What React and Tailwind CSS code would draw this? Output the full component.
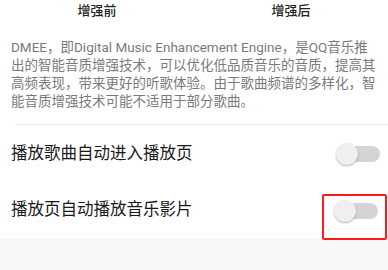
import React from "react";

function Toggle() {
  return (
    <div className="relative w-[46px] h-[24px] flex items-center">
      <div className="ml-[9px] w-[35px] h-[16px] rounded-full bg-[#d4d4d4]" />
      <div className="absolute left-0 top-[1px] w-[22px] h-[22px] rounded-full bg-[#efefef] shadow-[0_1px_2px_rgba(0,0,0,0.3)]" />
    </div>
  );
}

export default function App() {
  const font = { fontFamily: 'Roboto, "Noto Sans CJK SC", sans-serif' };
  return (
    <div className="w-[388px] h-[270px] bg-white relative overflow-hidden" style={font}>
      <div className="grid grid-cols-2 h-[22px] items-center">
        <div className="text-center text-[13px] font-medium text-[#222]">增强前</div>
        <div className="text-center text-[13px] font-medium text-[#222]">增强后</div>
      </div>
      <div className="pt-[16px] px-[11px] text-[13.5px] leading-[18px] text-[#7a7a7a]">
        <div className="whitespace-nowrap">DMEE，即Digital Music Enhancement Engine，是QQ音乐推</div>
        <div className="whitespace-nowrap">出的智能音质增强技术，可以优化低品质音乐的音质，提高其</div>
        <div className="whitespace-nowrap">高频表现，带来更好的听歌体验。由于歌曲频谱的多样化，智</div>
        <div className="whitespace-nowrap">能音质增强技术可能不适用于部分歌曲。</div>
      </div>
      <div className="mt-[14px] ml-[15px] h-px bg-[#eeeeee]" />
      <div className="flex items-center justify-between h-[58px] pl-[11px] pr-[6px]">
        <span className="text-[16.5px] text-[#1a1a1a]">播放歌曲自动进入播放页</span>
        <Toggle />
      </div>
      <div className="flex items-center justify-between h-[55px] pl-[11px] pr-[8px]">
        <span className="text-[16.5px] text-[#1a1a1a]">播放页自动播放音乐影片</span>
        <Toggle />
      </div>
      <div className="h-[40px] bg-[#f7f7f7]" />
      <div className="absolute left-[322px] top-[194px] w-[65px] h-[46px] border-[2.5px] border-[#ff1a1a] rounded-[2px]" />
    </div>
  );
}
